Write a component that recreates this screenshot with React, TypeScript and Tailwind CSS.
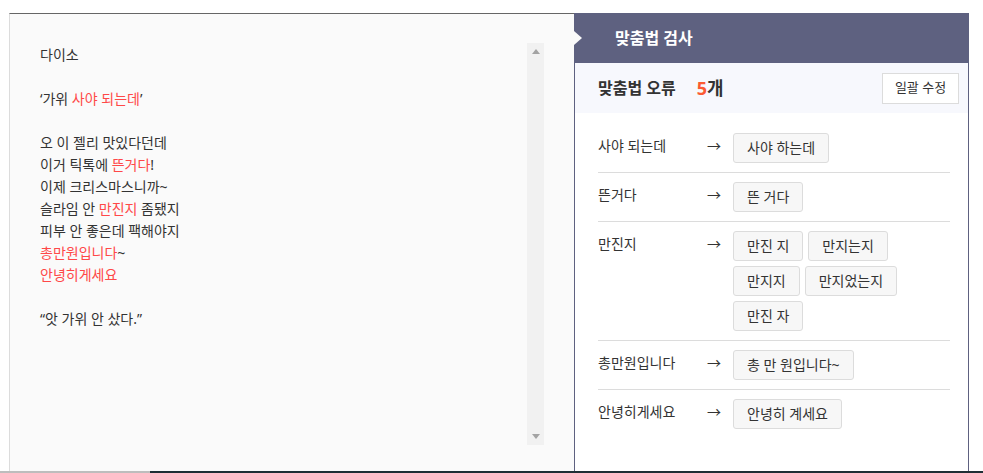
import React from "react";

const FONT = { fontFamily: '"Noto Sans", "Noto Sans CJK KR", sans-serif' };

const R = ({ children }: { children: React.ReactNode }) => (
  <span className="text-[#ff4848]">{children}</span>
);

type Row = { label: string; fixes: string[] };

const rows: Row[] = [
  { label: "사야 되는데", fixes: ["사야 하는데"] },
  { label: "뜬거다", fixes: ["뜬 거다"] },
  { label: "만진지", fixes: ["만진 지", "만지는지", "만지지", "만지었는지", "만진 자"] },
  { label: "총만원입니다", fixes: ["총 만 원입니다~"] },
  { label: "안녕히게세요", fixes: ["안녕히 계세요"] },
];

function FixButton({ text }: { text: string }) {
  return (
    <div className="h-[30px] px-[13px] border border-[#dcdcdc] rounded-[3px] bg-[#f7f7f7] text-[14px] leading-[28px] text-[#333] whitespace-pre">
      {text}
    </div>
  );
}

export default function App() {
  return (
    <div className="w-[983px] h-[473px] bg-white overflow-hidden flex flex-col" style={FONT}>
      <div className="h-[13px]" />
      <div className="flex h-[458px]">
        <div className="w-[9px]" />
        {/* Left panel */}
        <div className="w-[565px] h-full border-t border-l border-t-[#666] border-l-[#dcdcdc] bg-[#fafafa] pt-[29px] pl-[30px]">
          <div className="w-[504px] h-[402px] flex">
            <div className="flex-1 pt-[1px] text-[14px] leading-[22px] text-[#333]">
              <div>다이소</div>
              <div>&nbsp;</div>
              <div>
                ‘가위 <R>사야 되는데</R>’
              </div>
              <div>&nbsp;</div>
              <div>오 이 젤리 맛있다던데</div>
              <div>
                이거 틱톡에 <R>뜬거다</R>!
              </div>
              <div>이제 크리스마스니까~</div>
              <div>
                슬라임 안 <R>만진지</R> 좀됐지
              </div>
              <div>피부 안 좋은데 팩해야지</div>
              <div>
                <R>총만원입니다</R>~
              </div>
              <div>
                <R>안녕히게세요</R>
              </div>
              <div>&nbsp;</div>
              <div>“앗 가위 안 샀다.”</div>
            </div>
            <div className="w-[17px] h-full bg-[#f1f1f1] flex flex-col justify-between">
              <div className="h-[17px] flex items-center justify-center">
                <div className="w-0 h-0 border-x-[4px] border-x-transparent border-b-[5px] border-b-[#a3a3a3]" />
              </div>
              <div className="h-[17px] flex items-center justify-center">
                <div className="w-0 h-0 border-x-[4px] border-x-transparent border-t-[5px] border-t-[#a3a3a3]" />
              </div>
            </div>
          </div>
        </div>
        {/* Right panel */}
        <div className="w-[395px] h-full flex flex-col">
          <div className="relative h-[50px] bg-[#5e6180] pl-[41px] flex items-center">
            <div className="absolute left-0 top-[18px] w-0 h-0 border-y-[7px] border-y-transparent border-l-[8px] border-l-[#fafafa]" />
            <span className="text-white font-bold text-[16px]">맞춤법 검사</span>
          </div>
          <div className="flex-1 border-l border-r border-[#5e6180] flex flex-col">
            <div className="h-[50px] bg-[#f7f8fd] pl-[23px] pr-[9px] flex items-center">
              <span className="text-[16px] font-bold text-[#333]">맞춤법 오류</span>
              <span className="ml-[21px] font-bold text-[#333] text-[18px]">
                <span className="text-[#fb5a32]">5</span>개
              </span>
              <div className="ml-auto h-[31px] w-[77px] border border-[#dcdcdc] bg-white text-[13px] text-[#333] flex items-center justify-center">
                일괄 수정
              </div>
            </div>
            <div className="pt-[11px] pl-[23px] pr-[18px]">
              {rows.map((r, i) => (
                <div
                  key={r.label}
                  className={`flex items-start py-[9px] ${i < rows.length - 1 ? "border-b border-[#dcdcdc]" : ""}`}
                >
                  <div className="w-[109px] text-[14px] leading-[26px] text-[#333]">{r.label}</div>
                  <div className="w-[26px] text-[14px] leading-[26px] text-[#333]">→</div>
                  <div className="w-[180px] flex flex-wrap gap-x-[5px] gap-y-[5px]">
                    {r.fixes.map((f) => (
                      <FixButton key={f} text={f} />
                    ))}
                  </div>
                </div>
              ))}
            </div>
          </div>
        </div>
        <div className="flex-1" />
      </div>
      <div className="h-[2px] flex">
        <div className="w-[150px] bg-[#bdbdbd]" />
        <div className="flex-1 bg-[#1f2f35]" />
      </div>
    </div>
  );
}
